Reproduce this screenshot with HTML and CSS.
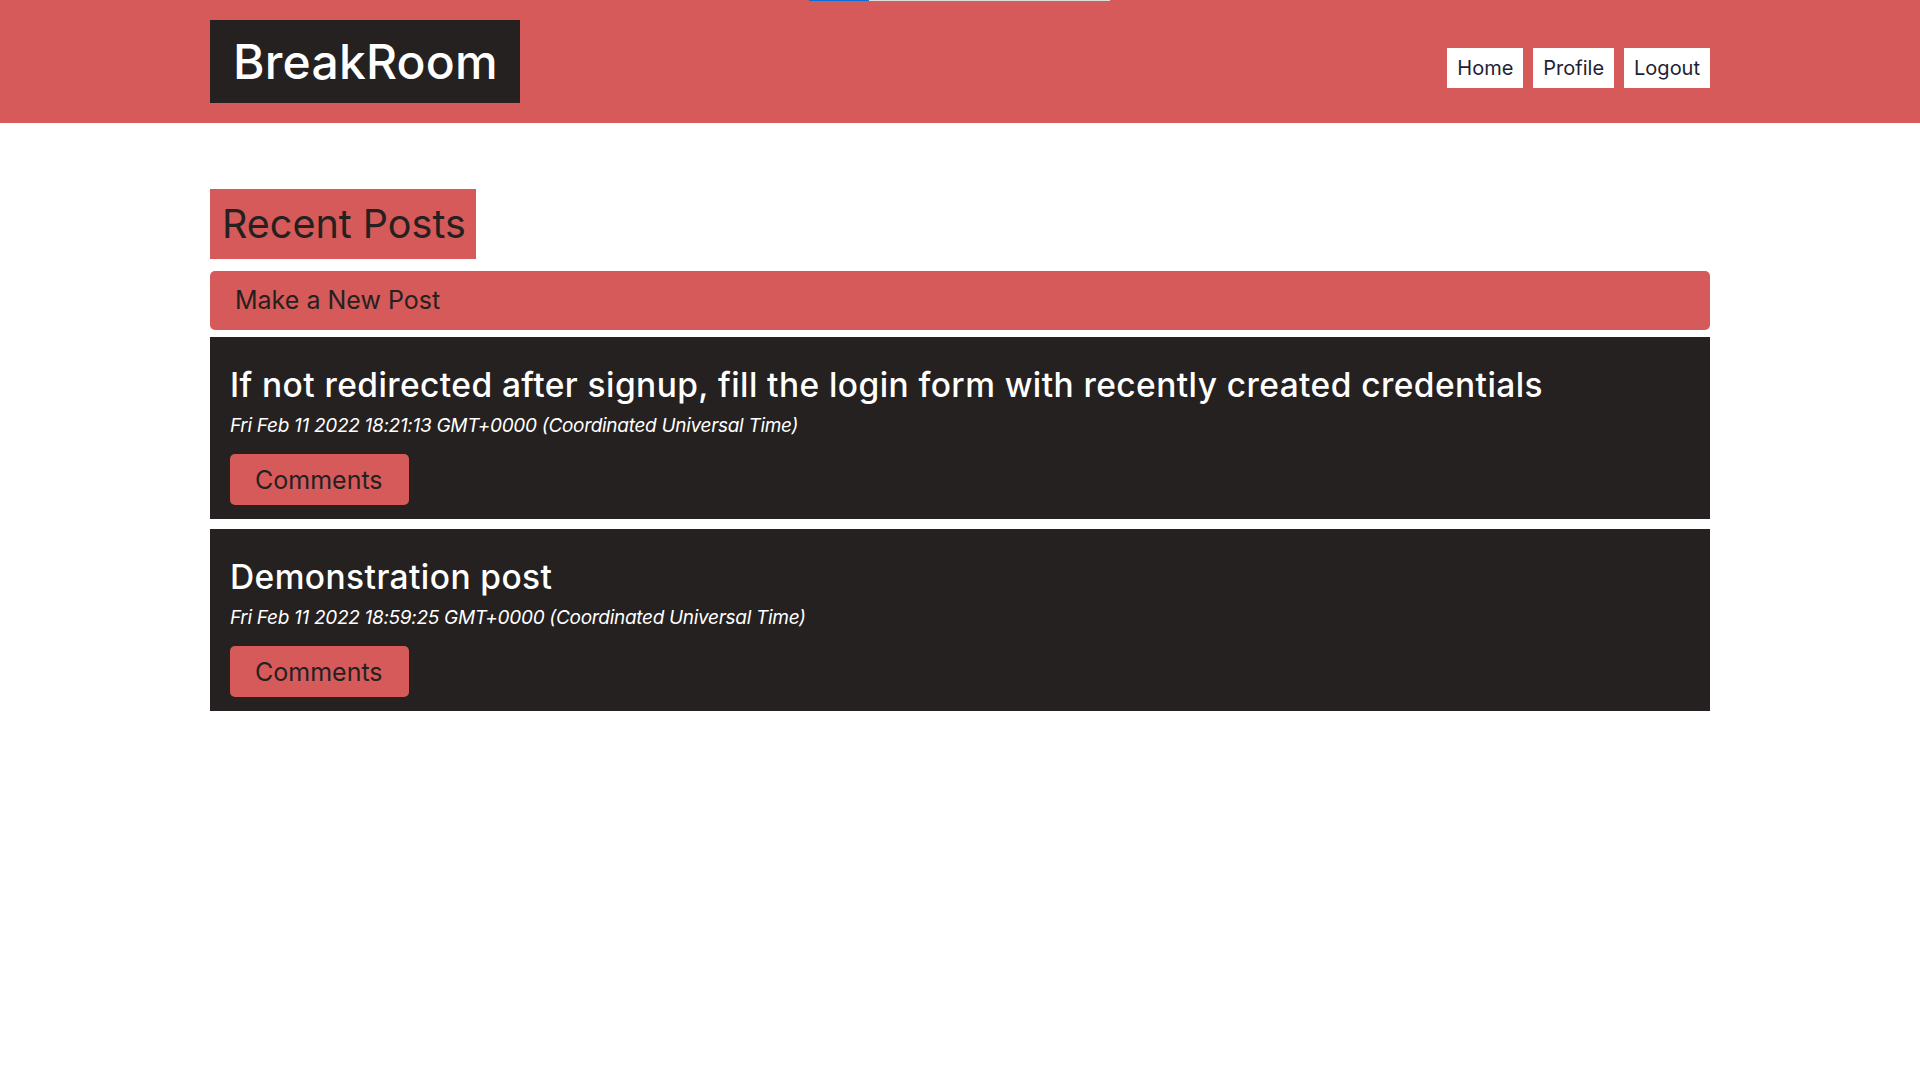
FILE: index.html
```html
<!DOCTYPE html>
<html lang="en">
<head>
<meta charset="utf-8">
<title>BreakRoom</title>
<link rel="stylesheet" href="styles.css">
</head>
<body>
<div class="topbar"><span class="topbar-fill"></span></div>
<header class="site-header">
  <div class="container header-inner">
    <a class="logo" href="#">BreakRoom</a>
    <nav class="nav">
      <a class="nav-link" href="#">Home</a>
      <a class="nav-link" href="#">Profile</a>
      <a class="nav-link" href="#">Logout</a>
    </nav>
  </div>
</header>
<main class="container main">
  <h1 class="page-title">Recent Posts</h1>
  <a class="new-post" href="#">Make a New Post</a>
  <section class="posts">
    <article class="post">
      <h2 class="post-title">If not redirected after signup, fill the login form with recently created credentials</h2>
      <p class="post-date">Fri Feb 11 2022 18:21:13 GMT+0000 (Coordinated Universal Time)</p>
      <button class="comments-btn">Comments</button>
    </article>
    <article class="post">
      <h2 class="post-title">Demonstration post</h2>
      <p class="post-date">Fri Feb 11 2022 18:59:25 GMT+0000 (Coordinated Universal Time)</p>
      <button class="comments-btn">Comments</button>
    </article>
  </section>
</main>
</body>
</html>
```

FILE: styles.css
```css
* { box-sizing: border-box; }

body {
  margin: 0;
  background: #ffffff;
  font-family: Inter, "Open Sans", "Liberation Sans", sans-serif;
  color: #252120;
}

.topbar {
  position: absolute;
  top: 0;
  left: 809px;
  width: 301px;
  height: 1px;
  background: #dcdcdc;
}
.topbar-fill {
  display: block;
  width: 60px;
  height: 1px;
  background: #0b6fd6;
}

.container {
  width: 1500px;
  margin: 0 auto;
}

.site-header {
  background: #d65a5a;
  padding: 20px 0;
}
.header-inner {
  display: flex;
  justify-content: space-between;
  align-items: flex-start;
}
.logo {
  display: block;
  background: #252120;
  color: #ffffff;
  text-decoration: none;
  font-size: 48px;
  font-weight: 500;
  height: 83px;
  line-height: 83px;
  padding: 0 22px 0 23px;
  letter-spacing: 0.2px;
}
.nav {
  display: flex;
  gap: 10px;
  margin-top: 28px;
}
.nav-link {
  display: block;
  background: #ffffff;
  color: #1f2233;
  text-decoration: none;
  font-size: 20px;
  height: 40px;
  line-height: 40px;
  padding: 0 10px;
}

.main {
  padding-top: 66px;
}
.page-title {
  display: inline-block;
  margin: 0;
  background: #d65a5a;
  color: #252120;
  font-size: 39.5px;
  font-weight: 400;
  height: 70px;
  line-height: 70px;
  padding: 0 10px 0 12px;
}
.new-post {
  display: block;
  margin-top: 12px;
  background: #d65a5a;
  color: #252120;
  text-decoration: none;
  border-radius: 5px;
  height: 59px;
  line-height: 59px;
  padding: 0 25px;
  font-size: 25px;
}

.posts {
  display: flex;
  flex-direction: column;
  gap: 10px;
  margin-top: 7px;
}
.post {
  background: #252120;
  padding: 28px 20px 14px;
}
.post-title {
  margin: 0;
  color: #ffffff;
  font-size: 33.5px;
  letter-spacing: 0.42px;
  line-height: 40px;
  font-weight: 500;
}
.post-date {
  margin: 9px 0 0;
  color: #ffffff;
  font-size: 19px;
  letter-spacing: -0.3px;
  line-height: 24px;
  font-style: italic;
}
.comments-btn {
  display: block;
  margin-top: 16px;
  height: 51px;
  padding: 0 26px 0 25px;
  border: none;
  border-radius: 5px;
  background: #d65a5a;
  color: #252120;
  font-family: inherit;
  font-size: 25px;
  cursor: pointer;
}
```
